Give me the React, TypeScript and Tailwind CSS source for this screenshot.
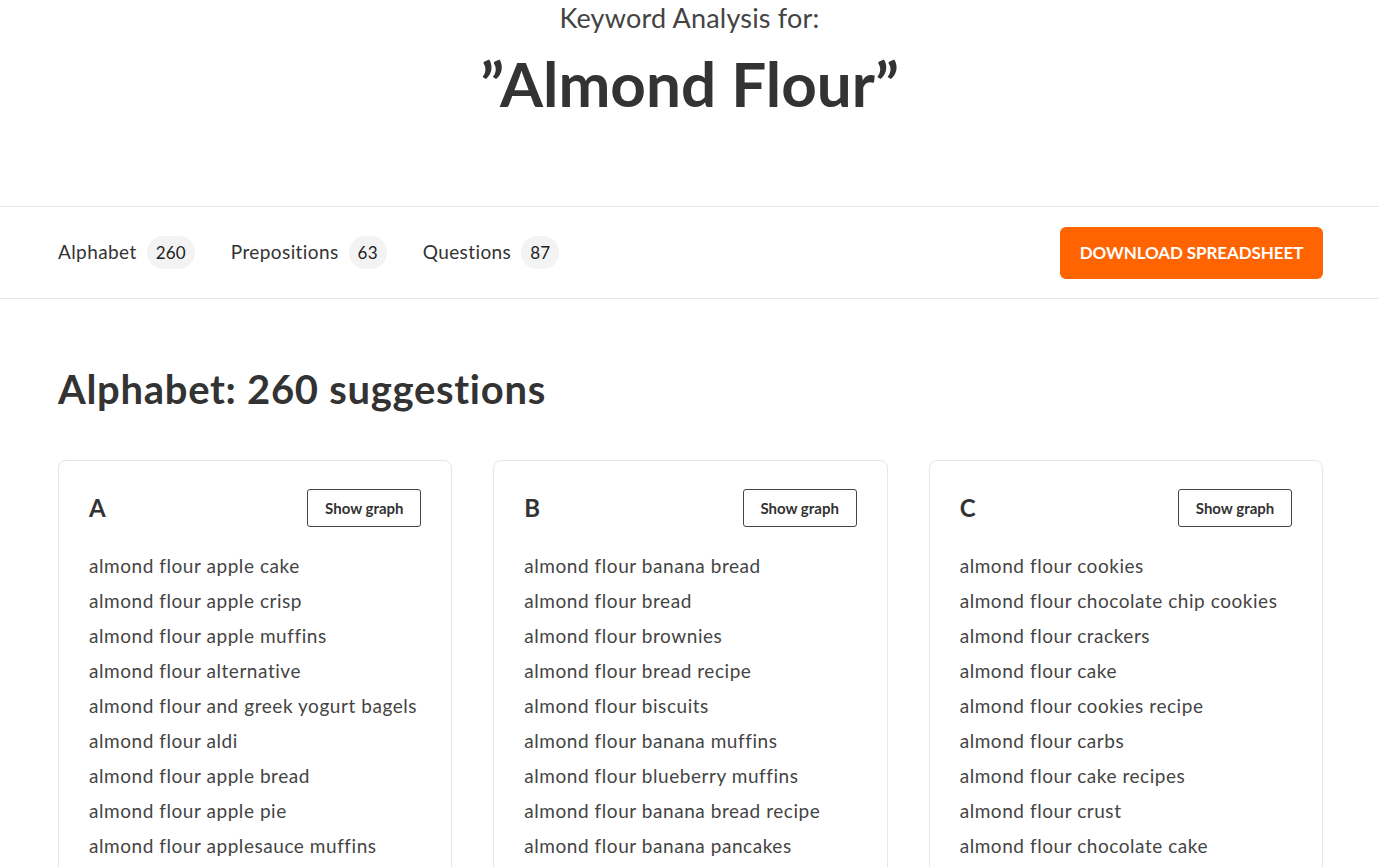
import React from "react";

const groups = [
  {
    letter: "A",
    items: [
      "almond flour apple cake",
      "almond flour apple crisp",
      "almond flour apple muffins",
      "almond flour alternative",
      "almond flour and greek yogurt bagels",
      "almond flour aldi",
      "almond flour apple bread",
      "almond flour apple pie",
      "almond flour applesauce muffins",
      "almond flour almond milk pancakes",
    ],
  },
  {
    letter: "B",
    items: [
      "almond flour banana bread",
      "almond flour bread",
      "almond flour brownies",
      "almond flour bread recipe",
      "almond flour biscuits",
      "almond flour banana muffins",
      "almond flour blueberry muffins",
      "almond flour banana bread recipe",
      "almond flour banana pancakes",
      "almond flour blondies",
    ],
  },
  {
    letter: "C",
    items: [
      "almond flour cookies",
      "almond flour chocolate chip cookies",
      "almond flour crackers",
      "almond flour cake",
      "almond flour cookies recipe",
      "almond flour carbs",
      "almond flour cake recipes",
      "almond flour crust",
      "almond flour chocolate cake",
      "almond flour cupcakes",
    ],
  },
];

const tabs = [
  { label: "Alphabet", count: 260 },
  { label: "Prepositions", count: 63 },
  { label: "Questions", count: 87 },
];

export default function App() {
  return (
    <div
      className="min-h-screen bg-white text-[#333]"
      style={{ fontFamily: "Lato, 'Open Sans', sans-serif" }}
    >
      {/* Title */}
      <header className="flex flex-col items-center pt-[2px] h-[206px]">
        <p className="text-[27px] leading-[32px] tracking-[0.2px] text-[#444]">
          Keyword Analysis for:
        </p>
        <h1 className="mt-[15px] text-[62px] font-bold leading-[68px] text-[#333]">
          ”Almond Flour”
        </h1>
      </header>

      {/* Tabs */}
      <div className="border-y border-[#e6e6e6]">
        <div className="pl-[58px] pr-[56px] flex h-[91px] items-center justify-between">
          <nav className="flex items-center gap-[36px]">
            {tabs.map((t) => (
              <div key={t.label} className="flex items-center gap-[10px]">
                <span className="text-[19px] tracking-[0.4px] text-[#333]">{t.label}</span>
                <span className="flex h-[33px] min-w-[37px] items-center justify-center rounded-full bg-[#f3f3f3] px-[9px] text-[17px] tracking-[0.2px] text-[#222]">
                  {t.count}
                </span>
              </div>
            ))}
          </nav>
          <button className="h-[52px] w-[263px] rounded-[6px] bg-[#ff6400] text-[17px] font-bold uppercase tracking-[-0.1px] text-white">
            Download Spreadsheet
          </button>
        </div>
      </div>

      {/* Results */}
      <main className="pl-[58px] pr-[56px] pt-[66px]">
        <h2 className="text-[40px] font-bold leading-[48px] tracking-[0.7px] text-[#333]">
          Alphabet: 260 suggestions
        </h2>

        <div className="mt-[47px] grid grid-cols-3 gap-[41px]">
          {groups.map((g) => (
            <section
              key={g.letter}
              className="rounded-[8px] border border-[#e6e6e6] px-[30px] pt-[28px] pb-[30px]"
            >
              <div className="flex items-center justify-between">
                <h3 className="text-[24px] font-bold text-[#333]">{g.letter}</h3>
                <button className="h-[38px] w-[114px] rounded-[3px] border border-[#444] text-[15px] font-bold text-[#333]">
                  Show graph
                </button>
              </div>
              <ul className="mt-[21px] flex flex-col">
                {g.items.map((it) => (
                  <li key={it} className="text-[19px] leading-[35px] tracking-[0.55px] text-[#444]">
                    {it}
                  </li>
                ))}
              </ul>
            </section>
          ))}
        </div>
      </main>
    </div>
  );
}
